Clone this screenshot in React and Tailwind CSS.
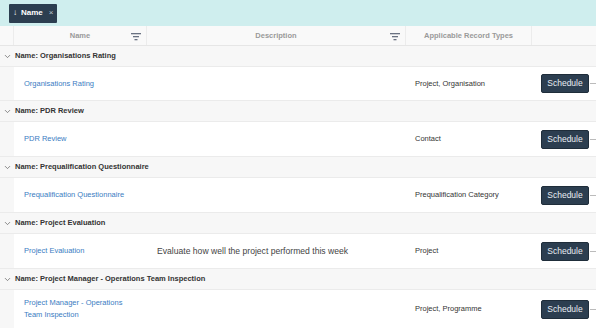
import { ChevronDown } from "lucide-react";

const groups = [
  { name: "Organisations Rating", link: ["Organisations Rating"], desc: "", types: "Project, Organisation", h: "h-[34px]" },
  { name: "PDR Review", link: ["PDR Review"], desc: "", types: "Contact", h: "h-[35px]" },
  { name: "Prequalification Questionnaire", link: ["Prequalification Questionnaire"], desc: "", types: "Prequalification Category", h: "h-[35px]" },
  { name: "Project Evaluation", link: ["Project Evaluation"], desc: "Evaluate how well the project performed this week", types: "Project", h: "h-[35px]" },
  { name: "Project Manager - Operations Team Inspection", link: ["Project Manager - Operations", "Team Inspection"], desc: "", types: "Project, Programme", h: "h-[39px]" },
];

function FilterIcon() {
  return (
    <svg width="10" height="8" viewBox="0 0 10 8" className="text-gray-500">
      <rect x="0" y="0" width="10" height="1.3" fill="currentColor" />
      <rect x="2" y="3" width="6" height="1.3" fill="currentColor" />
      <rect x="3.5" y="6" width="3" height="1.3" fill="currentColor" />
    </svg>
  );
}

export default function App() {
  return (
    <div className="w-[596px] h-[328px] overflow-hidden bg-white text-[7.5px] font-['Liberation_Sans',Arial,sans-serif]">
      <div className="h-[26px] bg-[#cfeeee] flex items-center px-[9px]">
        <span className="inline-flex items-center gap-[4px] h-[19px] px-[4px] bg-[#2c3e50] text-white font-bold text-[8px] rounded-[1px]">
          <span className="font-normal">↓</span>Name<span className="font-normal text-[#c0c8d0] ml-[2px]">×</span>
        </span>
      </div>

      <div className="grid grid-cols-[14px_133px_259px_126px_1fr] h-[20px] bg-[#f9f9f9] border-b border-[#e6e6e6] text-[#9a9a9a] font-bold">
        <div className="border-r border-[#ececec]" />
        <div className="relative flex items-center justify-center border-r border-[#ececec]">
          Name
          <span className="absolute right-[5px] top-[7px]"><FilterIcon /></span>
        </div>
        <div className="relative flex items-center justify-center border-r border-[#ececec]">
          Description
          <span className="absolute right-[5px] top-[7px]"><FilterIcon /></span>
        </div>
        <div className="flex items-center justify-center border-r border-[#ececec]">Applicable Record Types</div>
        <div />
      </div>

      {groups.map((g) => (
        <div key={g.name}>
          <div className="h-[21px] flex items-center bg-[#f7f7f7] border-b border-[#ebebeb] font-bold text-[#333]">
            <ChevronDown className="w-[9px] h-[9px] ml-[3px] mr-[3px] text-[#666]" strokeWidth={2} />
            Name: {g.name}
          </div>
          <div className={`grid grid-cols-[14px_133px_259px_126px_1fr] border-b border-[#ebebeb] ${g.h}`}>
            <div className="bg-[#f7f7f7]" />
            <div className="flex flex-col justify-center pl-[10px] text-[#3a7cc2] leading-[12px]">
              {g.link.map((l) => <span key={l}>{l}</span>)}
            </div>
            <div className="flex items-center pl-[10px] text-[#444] text-[8.6px]">{g.desc}</div>
            <div className="flex items-center pl-[9px] text-[#333]">{g.types}</div>
            <div className="flex items-center pl-[9px]">
              <button className="h-[19px] w-[48px] bg-[#2c3e50] text-[#e8edf2] text-[8.5px] rounded-[2px] border border-[#1f2d3a]">Schedule</button>
              <span className="ml-[1px] w-[6px] border-t border-dashed border-[#bbb]" />
            </div>
          </div>
        </div>
      ))}
    </div>
  );
}
